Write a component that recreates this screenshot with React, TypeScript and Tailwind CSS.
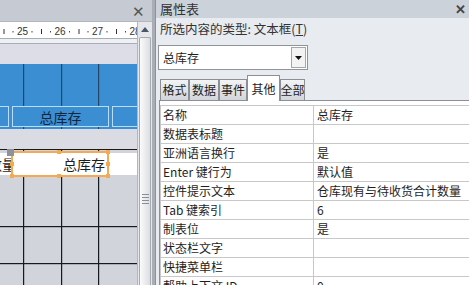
import React from 'react';

const props = [
  { name: '名称', value: '总库存' },
  { name: '数据表标题', value: '' },
  { name: '亚洲语言换行', value: '是' },
  { name: 'Enter 键行为', value: '默认值' },
  { name: '控件提示文本', value: '仓库现有与待收货合计数量' },
  { name: 'Tab 键索引', value: '6' },
  { name: '制表位', value: '是' },
  { name: '状态栏文字', value: '' },
  { name: '快捷菜单栏', value: '' },
  { name: '帮助上下文 ID', value: '0' },
];

const tabs = ['格式', '数据', '事件', '其他', '全部'];
const tabWidths = ['w-[29px]', 'w-[30px]', 'w-[28px]', 'w-[33px]', 'w-[25px]'];

function Ruler() {
  const nums = [
    { x: 22.5, t: '25' },
    { x: 60, t: '26' },
    { x: 97.5, t: '27' },
    { x: 135, t: '28' },
  ];
  return (
    <svg width="137" height="16" className="block">
      {nums.map((n) => (
        <g key={n.t}>
          <text x={n.x} y="13" fontSize="10" textAnchor="middle" fill="#333" fontFamily="Liberation Sans, sans-serif">
            {n.t}
          </text>
          <rect x={n.x - 10} y="9" width="1" height="1.5" fill="#444" />
          <rect x={n.x + 9} y="9" width="1" height="1.5" fill="#444" />
          <rect x={n.x - 19} y="7" width="1" height="5" fill="#333" />
        </g>
      ))}
    </svg>
  );
}

function Grid({ h, lines, color }: { h: number; lines: number[]; color: string }) {
  return (
    <svg width="137" height={h} className="absolute left-0 top-0">
      {[23, 61, 98].map((x) => (
        <rect key={x} x={x} y="0" width="1.2" height={h} fill={color} />
      ))}
      {lines.map((y) => (
        <rect key={y} x="0" y={y} width="137" height="1.2" fill={color} />
      ))}
    </svg>
  );
}

export default function App() {
  return (
    <div className="flex w-[469px] h-[285px] overflow-hidden bg-[#e8ebef] font-['Noto_Sans_CJK_SC',sans-serif] text-[#1e1e1e]">
      {/* form design surface */}
      <div className="flex flex-col w-[152px] shrink-0">
        <div className="h-[22px] shrink-0 bg-[#c6cbd3] border-b border-[#b2b7bf] flex items-center justify-end pr-[7px] text-[#555] text-[15px] leading-none">
          ✕
        </div>
        <div className="flex flex-1 min-h-0">
          <div className="w-[137px] flex flex-col overflow-hidden">
            <div className="h-[16px] shrink-0 bg-white">
              <Ruler />
            </div>
            <div className="h-[6px] shrink-0 bg-[#eef0f4] border-t border-b border-[#a9aeb6]" />
            <div className="h-[20px] shrink-0 bg-[#dcdde6]" />
            {/* header section */}
            <div className="relative h-[65px] shrink-0 bg-[#3c8ed2]">
              <Grid h={65} lines={[]} color="#22476a" />
              <div className="relative flex gap-[3px] pt-[42px] h-[63px]">
                <div className="-ml-px w-[10px] shrink-0 border border-[#b8def6] bg-[#3c8ed2]" />
                <div className="w-[97px] shrink-0 border border-[#b8def6] bg-[#3c8ed2] flex items-center justify-center text-[14px] leading-none text-[#14263a]">
                  总库存
                </div>
                <div className="flex-1 border border-r-0 border-[#b8def6] bg-[#3c8ed2]" />
              </div>
            </div>
            <div className="h-[20px] shrink-0 bg-[#dadbe3]" />
            {/* detail section */}
            <div className="relative flex-1 bg-[#d2d4dc] border-t border-[#1a1a1a]">
              <Grid h={140} lines={[76, 113]} color="#151a22" />
              <div className="relative flex items-center h-[26px] mt-[1px]">
                <div className="w-[11px] h-[22px] bg-white overflow-hidden flex justify-end items-center text-[14px] leading-none whitespace-nowrap">
                  <span className="-mr-[5px]">数量</span>
                </div>
                <div className="relative w-[98px] h-[26px] border-2 border-[#f3aa52] bg-white flex items-center justify-end pr-[2px] text-[14px] leading-none">
                  总库存
                  <span className="absolute -left-[6px] -top-[4px] w-[7px] h-[7px] bg-[#8e929a]" />
                  <span className="absolute left-[44px] -top-[3px] w-[4px] h-[4px] bg-[#f3aa52]" />
                  <span className="absolute -right-[3px] -top-[3px] w-[4px] h-[4px] bg-[#f3aa52]" />
                  <span className="absolute -left-[3px] top-[9px] w-[4px] h-[4px] bg-[#f3aa52]" />
                  <span className="absolute -right-[3px] top-[9px] w-[4px] h-[4px] bg-[#f3aa52]" />
                  <span className="absolute left-[44px] -bottom-[3px] w-[4px] h-[4px] bg-[#f3aa52]" />
                  <span className="absolute -left-[3px] -bottom-[3px] w-[4px] h-[4px] bg-[#f3aa52]" />
                  <span className="absolute -right-[3px] -bottom-[3px] w-[4px] h-[4px] bg-[#f3aa52]" />
                </div>
                <div className="flex-1 h-[22px] bg-white" />
              </div>
            </div>
          </div>
          {/* vertical scrollbar */}
          <div className="w-[15px] flex flex-col bg-[#e6e7ea] border-l border-[#b3b7bd]">
            <div className="h-[15px] shrink-0 flex items-center justify-center">
              <svg width="8" height="5">
                <path d="M0 5 L4 0 L8 5 Z" fill="#46576a" />
              </svg>
            </div>
            <div className="flex-1 mx-[1px] rounded-t-[2px] border border-b-0 border-[#a5a9b0] bg-gradient-to-r from-[#fbfbfb] to-[#dcdee2] flex flex-col items-center pt-[156px] gap-[2px]">
              <div className="w-[7px] h-px bg-[#8a8f96]" />
              <div className="w-[7px] h-px bg-[#8a8f96]" />
              <div className="w-[7px] h-px bg-[#8a8f96]" />
              <div className="w-[7px] h-px bg-[#8a8f96]" />
            </div>
          </div>
        </div>
      </div>
      <div className="w-[4px] shrink-0 bg-[#a9aeb6] border-r border-[#8d929a]" />

      {/* property sheet */}
      <div className="flex-1 flex flex-col min-w-0">
        <div className="h-[18px] shrink-0 bg-[#ccd2da] flex items-center justify-between pl-[4px] pr-[3px] text-[13px] leading-[18px] text-[#333]">
          <span>属性表</span>
          <span className="text-[13px] font-bold text-[#444]">✕</span>
        </div>
        <div className="h-[20px] shrink-0 pl-[4px] pt-[4px] text-[12.5px] leading-[14px] text-[#333] whitespace-nowrap">
          所选内容的类型: 文本框(<span className="underline">T</span>)
        </div>
        <div className="shrink-0 ml-[2px] mt-[7px] w-[150px] h-[25px] border border-[#8f949a] bg-white flex items-center p-px">
          <span className="flex-1 pl-[3px] text-[12px] leading-none">总库存</span>
          <div className="w-[15px] h-full border border-[#a3a7ad] bg-[#f3f3f3] flex items-center justify-center">
            <svg width="7" height="4">
              <path d="M0 0 L7 0 L3.5 4 Z" fill="#111" />
            </svg>
          </div>
        </div>
        <div className="shrink-0 ml-[4px] mt-[4px] h-[26px] flex items-end">
          {tabs.map((t, i) => (
            <div
              key={t}
              className={`${tabWidths[i]} shrink-0 overflow-hidden whitespace-nowrap flex items-center justify-center border border-b-0 border-[#8c9096] text-[12px] leading-none ${
                t === '其他' ? 'h-[26px] bg-white -mb-px relative' : 'h-[21px] bg-gradient-to-b from-[#f2f3f5] to-[#d2d5da]'
              }`}
            >
              {t}
            </div>
          ))}
        </div>
        <div className="flex-1 min-h-0 overflow-hidden ml-[3px] border-t border-l border-[#8c9096] bg-white pt-[4px]">
          <div className="border-t border-l border-[#c8c8c8]">
            {props.map((p) => (
              <div key={p.name} className="flex h-[19px] border-b border-[#c8c8c8] text-[12px] leading-none">
                <div className="w-[153px] shrink-0 border-r border-[#c8c8c8] pl-[2px] flex items-center whitespace-nowrap">
                  {p.name}
                </div>
                <div className="flex-1 pl-[3px] flex items-center whitespace-nowrap">{p.value}</div>
              </div>
            ))}
          </div>
        </div>
      </div>
    </div>
  );
}
